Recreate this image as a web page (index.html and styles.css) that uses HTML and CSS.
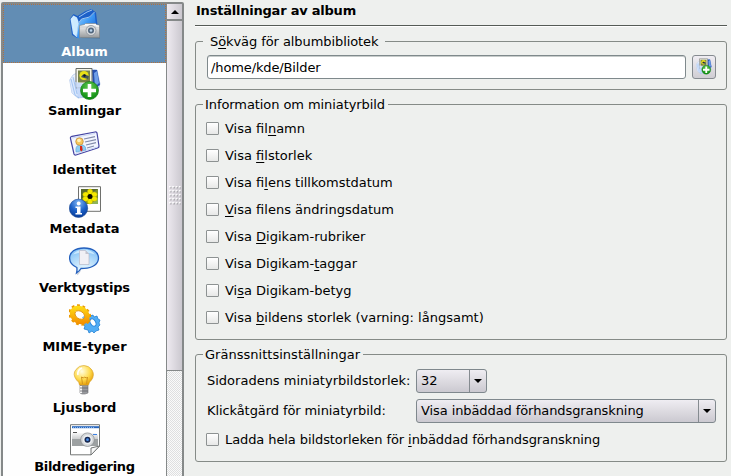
FILE: index.html
```html
<!DOCTYPE html>
<html lang="sv">
<head>
<meta charset="utf-8">
<title>Inställningar</title>
<link rel="stylesheet" href="styles.css">
</head>
<body>
<div class="window">
  <nav class="sidebar">
    <div class="list">
      <div class="item selected">
        <svg class="icon" viewBox="0 0 32 32">
          <defs>
            <linearGradient id="folder" x1="0" y1="0" x2="1" y2="1"><stop offset="0" stop-color="#a5dcff"/><stop offset=".45" stop-color="#3f9af5"/><stop offset="1" stop-color="#0b4fc4"/></linearGradient>
            <linearGradient id="pale" x1="0" y1="0" x2="1" y2="1"><stop offset="0" stop-color="#fff"/><stop offset="1" stop-color="#9cbcf0"/></linearGradient>
            <linearGradient id="metal" x1="0" y1="0" x2="0" y2="1"><stop offset="0" stop-color="#fff"/><stop offset="1" stop-color="#989b9d"/></linearGradient>
            <radialGradient id="green" cx=".5" cy=".3" r=".7"><stop offset="0" stop-color="#62c950"/><stop offset="1" stop-color="#078a0d"/></radialGradient>
            <radialGradient id="info" cx=".5" cy=".2" r=".8"><stop offset="0" stop-color="#83b8f5"/><stop offset=".55" stop-color="#1d62c8"/><stop offset="1" stop-color="#073b98"/></radialGradient>
            <linearGradient id="gold" x1="0" y1="0" x2="1" y2="1"><stop offset="0" stop-color="#ffe218"/><stop offset="1" stop-color="#f38a00"/></linearGradient>
            <radialGradient id="bulb" cx=".4" cy=".3" r=".7"><stop offset="0" stop-color="#fffde0"/><stop offset=".6" stop-color="#ffdc50"/><stop offset="1" stop-color="#e9a20c"/></radialGradient>
            <radialGradient id="bubble" cx=".5" cy=".9" r=".9"><stop offset="0" stop-color="#f0fcff"/><stop offset="1" stop-color="#82c1f6"/></radialGradient>
          </defs>
          <path d="M8 29L3 26 .800 10 4.500 5l4 2 8-5 6-2 2.500 2 2 1.500L29 20l-19 9z" fill="#1c5fc8"/>
          <path d="M7.500 28L4 25 1.500 10 4.500 6.500 8 8.500l1.500 4z" fill="#cdeaff"/>
          <path d="M7.500 28.500l2-14 3-4 8-2 5-5 2 17-17 9z" fill="url(#folder)"/>
          <path d="M3 9l3 16M7.500 28l2-14 3-4 8-2 5-5M10 8l8-5 5-2" fill="none" stroke="#d5efff" stroke-width=".7"/>
          <path d="M12 17l5-1 2-1h7l5 1v13.500l-19-.5z" fill="#46586a" opacity=".5"/>
          <path d="M10.500 16.500l5-1 1-1h10l1 1 3 1v12h-20z" fill="url(#metal)" stroke="#80888e" stroke-width=".7"/>
          <path d="M11 18h19" stroke="#c8cbcd" stroke-width="1"/>
          <circle cx="22" cy="21.500" r="5" fill="#d7dadd" stroke="#8b9298" stroke-width=".8"/>
          <circle cx="22" cy="21.500" r="3" fill="#51677e"/><circle cx="22" cy="21.500" r="1.300" fill="#b9d4ec"/>
          <path d="M27 17h3" stroke="#fff"/>
        </svg>
        <span>Album</span>
      </div>
      <div class="item">
        <svg class="icon" viewBox="0 0 32 32">
          <g id="collection">
            <path d="M9 30L3 25 .700 12 4 7l4-2 15-4 5 1 3 14-4 12z" fill="url(#pale)" stroke="#9cb9e5" stroke-width=".6"/>
            <path d="M23 2l5 0 3 15-7 4z" fill="#264fae"/><path d="M25 5l3-2 2 12-4 4z" fill="#6f9fe8"/>
            <path d="M7 .500h16V19L7 20z" fill="#f5f5e8" stroke="#676b67"/>
            <path d="M9 2.500h12v12H9z" fill="#788247"/>
            <circle cx="15" cy="7.500" r="4.600" fill="#e9df16"/><path d="M12 9q2-4 5-2l3 1-1 3-4-1z" fill="#43535b"/><circle cx="15.500" cy="7.500" r="1.200" fill="#11161b"/>
            <path d="M7 20L9 30 3 25 1 13l4-5z" fill="#dce8fc" opacity=".9"/>
            <path d="M6 14l12 2-8 14z" fill="#c4d8fa" opacity=".85"/>
            <path d="M2 11l4 16 4 3M4 9l4 17" stroke="#8ab4ec" stroke-width=".7" fill="none"/>
            <circle cx="20.500" cy="22.500" r="9" fill="url(#green)" stroke="#167b16" stroke-width=".7"/>
            <path d="M18.700 16h3.600v4.700H27v3.600h-4.700V29h-3.600v-4.700H14v-3.600h4.700z" fill="#fff"/>
          </g>
        </svg>
        <span class="tight">Samlingar</span>
      </div>
      <div class="item">
        <svg class="icon" viewBox="0 0 32 32">
          <path d="M1.500 11.500Q1 10 3 9.300L26 5q1.700-.3 2 1l2 13q.2 1.500-1.500 2L7 28q-1.600.3-2-1z" fill="#f2f5ff" stroke="#4545a3" stroke-width="1.200"/>
          <path d="M3 11l23-4.500M6.500 26.500L28.500 20" stroke="#cbd7f4"/>
          <path d="M15 12l11-2.400M16 15l11-2.400M17 18l10-2.400M18 21l7-2" stroke="#838baa" stroke-width="1.100"/>
          <path d="M7 25q-1-6 3-7h4q3 1 3 5z" fill="#8dcdf4" stroke="#4e99cf" stroke-width=".5"/>
          <circle cx="10.500" cy="14.500" r="3.800" fill="#f5c65e" stroke="#b57c27" stroke-width=".6"/><circle cx="10" cy="13.500" r="1.800" fill="#fff2bb"/>
          <path d="M11 19h2l.700 4-1.300 1.500-1.400-1.500z" fill="#d82718"/>
        </svg>
        <span>Identitet</span>
      </div>
      <div class="item">
        <svg class="icon" viewBox="0 0 32 32">
          <path d="M9.500.700h22v24.600h-22z" fill="#fff" stroke="#6f706d"/>
          <path d="M12 3h17v15H12z" fill="#788d34"/><path d="M12 3h17L12 13z" fill="#59692d"/><path d="M22 18l7-6v6z" fill="#8fb45b"/>
          <g fill="#f5e800" stroke="#b4ac00" stroke-width=".4"><ellipse cx="21" cy="6" rx="2.700" ry="3"/><ellipse cx="21" cy="15" rx="2.700" ry="3"/><ellipse cx="16.800" cy="8.500" rx="3" ry="2.500"/><ellipse cx="25.200" cy="8.500" rx="3" ry="2.500"/><ellipse cx="16.800" cy="12.800" rx="3" ry="2.500"/><ellipse cx="25.200" cy="12.800" rx="3" ry="2.500"/></g>
          <circle cx="21" cy="10.600" r="2.500" fill="#090a00"/>
          <circle cx="9.500" cy="22.300" r="9.200" fill="url(#info)" stroke="#244d95" stroke-width=".6"/>
          <circle cx="9.700" cy="17.500" r="1.900" fill="#fff"/><path d="M6.500 20.500h5V27H13v1.500H6.500V27H8v-5H6.500z" fill="#fff"/>
        </svg>
        <span>Metadata</span>
      </div>
      <div class="item">
        <svg class="icon" viewBox="0 0 32 32">
          <g transform="translate(0 1.500)">
          <path d="M8 28q3-3 3-5" stroke="#8090a8" stroke-width="2" opacity=".4"/>
          <path d="M15 1.500c9 0 14.500 4.200 14.500 10S24 21.800 15 21.800l-3 .2q-2 3-4.500 4.500.8-3 .3-5.500C3 19 .600 15.500.600 11.500.600 5.700 6 1.500 15 1.500z" fill="url(#bubble)" stroke="#235fbd" stroke-width="1.300"/>
          <path d="M4 8q4-5 11-5t11 5q-5-2-11-2T4 8z" fill="#d8f0ff" opacity=".8"/>
          <path d="M10.500 4h6l3.500 3.500V18h-9.500z" fill="#f1f0f5" stroke="#b7b9c8" stroke-width=".7"/><path d="M16.500 4v3.500H20z" fill="#c4c4cf"/>
          </g>
        </svg>
        <span class="tight">Verktygstips</span>
      </div>
      <div class="item">
        <svg class="icon" viewBox="0 0 32 32">
          <g transform="translate(0 1)">
          <path d="M14 12l3-1 2-2 2 2 3-1 1 2 3-1 1 3 2 1-1 3 1 2-2 2 1 3-3 1-2 2-2-2-3 2-1-3-4-1 1-3-3-2 2-2z" fill="#51adf5" stroke="#1979ce" stroke-width=".7"/>
          <ellipse cx="24" cy="17.500" rx="2.600" ry="4" fill="#fff" stroke="#2d88dc" transform="rotate(-30 24 17.500)"/>
          <g transform="rotate(35 10.800 10)">
            <ellipse cx="10.800" cy="10" rx="10.800" ry="8.800" fill="none" stroke="#eb9800" stroke-width="2.400" stroke-dasharray="2.800 2.600"/>
            <ellipse cx="10.800" cy="10" rx="7.900" ry="6.300" fill="none" stroke="url(#gold)" stroke-width="5"/>
            <ellipse cx="10.800" cy="10" rx="5.200" ry="3.700" fill="#fff" stroke="#dc8900" stroke-width=".8"/>
          </g>
          <path d="M13 12.500l2-1.500-.500 2.500z" fill="#49a8f4"/>
          </g>
        </svg>
        <span>MIME-typer</span>
      </div>
      <div class="item spaced">
        <svg class="icon" viewBox="0 0 32 32">
          <path d="M11 20h8v8l-3 1h-3l-2-1z" fill="#999b9f" stroke="#717174" stroke-width=".6"/><path d="M12 21v7" stroke="#f5f5f5" stroke-width="2"/><path d="M11 23h8M11 26h8" stroke="#646469" stroke-width=".8"/>
          <path d="M10.500 20q0-3-3-5Q3 9 7 4.500q3-4.200 8-4t8 4.500q3 5-.5 10-2.500 2-3 5z" fill="url(#bulb)" stroke="#d3a02b" stroke-width=".6"/>
          <path d="M13.500 19l-1-7 2 1 1-1 2 1 1-1-1 7" fill="none" stroke="#d19520" stroke-width="1"/><path d="M9 10Q8 5 13 3" fill="none" stroke="#fff" stroke-width="1.500"/>
        </svg>
        <span>Ljusbord</span>
      </div>
      <div class="item">
        <svg class="icon" viewBox="0 0 32 32">
          <path d="M1.500.700h29v21.500L22 30.800H1.500z" fill="#fff" stroke="#747776"/>
          <path d="M3 2.200h27v2H3z" fill="#2967bd"/><path d="M4 3.500h22" stroke="#8ab6ed" stroke-dasharray="1 1"/>
          <path d="M3 9l2-1h5l2 1h15l2 2v11H3z" fill="url(#metal)"/><path d="M3 15h26v7H3z" fill="#9da1a2"/><path d="M4 8.500h4" stroke="#555"/><path d="M24 10.500h4" stroke="#3d82e5"/>
          <circle cx="18.500" cy="15.700" r="6.800" fill="#d6d8da" stroke="#858a8d" stroke-width=".7"/><circle cx="18.500" cy="15.700" r="4.600" fill="#eceff1"/><circle cx="18.500" cy="15.700" r="3" fill="#182951"/><circle cx="18.500" cy="15.700" r="1.400" fill="#4b90e9"/>
          <path d="M22 31v-7l8.500-2z" fill="#f8f8f8" stroke="#747776"/>
        </svg>
        <span class="tighter">Bildredigering</span>
      </div>
    </div>
    <div class="scrollbar">
      <div class="up"><svg viewBox="0 0 8 4"><path d="M4 0l4 4H0z"/></svg></div>
      <div class="thumb"><svg class="grip" viewBox="0 0 12 19">
        <defs><pattern id="dots" width="3.300" height="4" patternUnits="userSpaceOnUse"><rect x="1" y="1" width="1.500" height="1.500" fill="#a5a4a9"/><rect width="1.500" height="1.500" fill="#fff"/></pattern></defs>
        <rect width="12" height="19" fill="url(#dots)"/></svg></div>
    </div>
  </nav>
  <main class="page">
    <h1>Inställningar av album</h1>
    <fieldset class="path">
      <legend>S<u>ö</u>kväg för albumbibliotek</legend>
      <div class="path-row">
        <input type="text" value="/home/kde/Bilder">
        <button type="button" aria-label="Bläddra"><svg viewBox="0 0 32 32"><use href="#collection"/></svg></button>
      </div>
    </fieldset>
    <fieldset class="info">
      <legend>Information om miniatyrbild</legend>
      <label class="check"><i></i><span>Visa fil<u>n</u>amn</span></label>
      <label class="check"><i></i><span>Visa <u>f</u>ilstorlek</span></label>
      <label class="check"><i></i><span>Visa fi<u>l</u>ens tillkomstdatum</span></label>
      <label class="check"><i></i><span><u>V</u>isa filens ändringsdatum</span></label>
      <label class="check"><i></i><span>Visa <u>D</u>igikam-rubriker</span></label>
      <label class="check"><i></i><span>Visa Digikam-<u>t</u>aggar</span></label>
      <label class="check"><i></i><span>Vi<u>s</u>a Digikam-betyg</span></label>
      <label class="check"><i></i><span>Visa <u>b</u>ildens storlek (varning: långsamt)</span></label>
    </fieldset>
    <fieldset class="interface">
      <legend>Gränssnittsinställningar</legend>
      <div class="row"><span>Sidoradens miniatyrbildstorlek:</span>
        <div class="combo small"><span>32</span><b><svg viewBox="0 0 8 4"><path d="M0 0h8L4 4z"/></svg></b></div></div>
      <div class="row"><span class="narrow">Klickåtgärd för miniatyrbild:</span>
        <div class="combo narrow"><span>Visa inbäddad förhandsgranskning</span><b><svg viewBox="0 0 8 4"><path d="M0 0h8L4 4z"/></svg></b></div></div>
      <label class="check narrow"><i></i><span>Ladda hela bildstorleken för <u>i</u>nbäddad förhandsgranskning</span></label>
    </fieldset>
  </main>
</div>
</body>
</html>
```
FILE: styles.css
```css
* { box-sizing: border-box; }
body {
  margin: 0;
  background: #eef0ee;
  color: #000;
  font: 13px/16px "DejaVu Sans", sans-serif;
  overflow: hidden;
}
.window { display: flex; height: 476px; }
.sidebar {
  display: flex;
  width: 183px;
  height: 480px;
  margin: 2px 0 0 1px;
  border: 2px solid #858989;
  border-radius: 2px 2px 0 0;
  background: #fefefe;
  flex: none;
}
.list { width: 163px; }
.item {
  display: flex;
  flex-direction: column;
  align-items: center;
  height: 59px;
  padding-top: 5px;
  font-weight: bold;
}
.item.selected {
  padding-top: 4px;
  border: 1px dotted #b5713a;
  background: #628db4;
  color: #fff;
}
.item.spaced { margin-top: 2px; }
.icon { width: 32px; height: 32px; display: block; flex: none; }
.item span { margin-top: 3px; }
.item .tight { letter-spacing: -.15px; }
.item .tighter { letter-spacing: -.28px; }
.scrollbar {
  width: 16px;
  border-left: 1px solid #858989;
  background: conic-gradient(#dedfe0 25%, #fafafa 0 50%, #dedfe0 0 75%, #fafafa 0) 0 0 / 2px 2px;
}
.up, .thumb {
  background: linear-gradient(90deg, #eeeaf0, #cbc8cf);
  display: flex;
  align-items: center;
  justify-content: center;
}
.up { height: 16px; border-bottom: 1px solid #858989; }
.up svg { width: 8px; height: 4px; }
.thumb { height: 351px; border-top: 1px solid #858989; border-bottom: 1px solid #858989; }
.grip { width: 12px; height: 19px; }
.page { width: 532px; margin-left: 11px; }
h1 {
  height: 27px;
  margin: 0;
  padding: 3px 0 0 1px;
  border-bottom: 1px solid #fff;
  box-shadow: inset 0 -1px #555b56;
  font-size: 13px;
  line-height: 16px;
  letter-spacing: -.22px;
}
fieldset {
  min-width: 0;
  margin: 0;
  padding: 0 10px 0 11px;
  border: 1px solid #858b87;
  border-radius: 3px;
}
legend {
  height: 17px;
  margin-left: -4px;
  padding: 0 3px 0 2px;
  line-height: 17px;
  letter-spacing: -.08px;
}
u { text-decoration-thickness: 1px; text-underline-offset: 2px; text-decoration-skip-ink: none; }
.narrow { letter-spacing: -.09px; }
.path { height: 57px; margin-top: 6px; }
.path legend { padding: 0 7px; }
.path-row { display: flex; gap: 6px; margin-top: 5px; }
input {
  flex: 1;
  min-width: 0;
  height: 24px;
  padding: 0 3px;
  border: 1px solid #7f898c;
  border-radius: 3px;
  background: #fff;
  font: inherit;
  letter-spacing: -.12px;
  color: #000;
  box-shadow: inset 0 1px #c7cccb;
}
button {
  width: 24px;
  height: 24px;
  padding: 2px 2px 3px 3px;
  border: 1px solid #858b90;
  border-radius: 3px;
  background: linear-gradient(#efedf2, #cfcdd3);
}
button svg { display: block; width: 16px; height: 17px; }
.info { height: 244px; margin-top: 6px; }
.check {
  display: flex;
  align-items: center;
  height: 27px;
  margin-left: -1px;
  gap: 6px;
}
.check i {
  width: 13px;
  height: 13px;
  border: 1px solid #8d9292;
  border-radius: 1px;
  background: linear-gradient(#fff, #e7e8e7);
}
.info .check:nth-of-type(1) { margin-top: 2px; }
.interface { height: 116px; margin-top: 6px; }
.interface legend { letter-spacing: .02px; }
.interface .check { margin-top: -3px; }
.row { display: flex; align-items: center; height: 24px; margin-bottom: 6px; }
.interface legend + .row { margin-top: 6px; }
.row > span { width: 209px; flex: none; white-space: nowrap; }
.combo {
  display: flex;
  flex: 1;
  height: 24px;
  border: 1px solid #7f888d;
  border-radius: 3px;
  background: linear-gradient(#efedf2, #cbc9d0);
}
.combo.small { flex: 0 0 71px; }
.combo span { flex: 1; padding-left: 4px; line-height: 22px; white-space: nowrap; }
.combo b {
  display: flex;
  align-items: center;
  justify-content: center;
  width: 17px;
  border-left: 1px solid #858b90;
}
.combo svg { width: 8px; height: 4px; }
```
